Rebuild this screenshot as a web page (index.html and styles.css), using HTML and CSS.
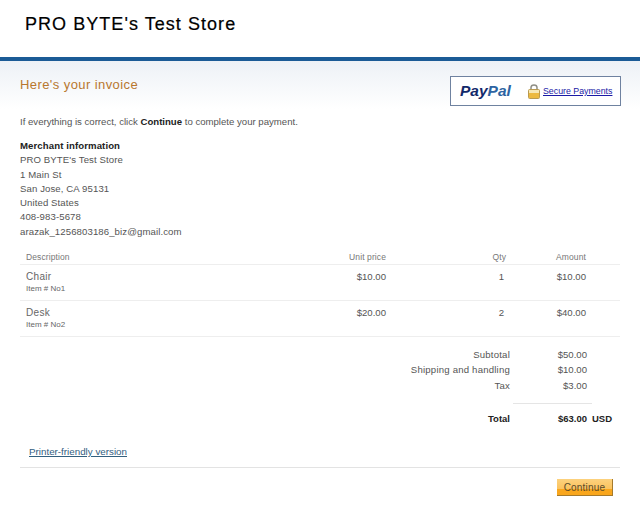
FILE: index.html
```html
<!DOCTYPE html>
<html lang="en">
<head>
<meta charset="utf-8">
<title>PRO BYTE's Test Store</title>
<link rel="stylesheet" href="styles.css">
</head>
<body>
<header class="store"><h1>PRO BYTE's Test Store</h1></header>
<main class="band">
  <div class="top">
    <h2>Here's your invoice</h2>
    <div class="secure">
      <span class="logo"><span class="pay">Pay</span><span class="pal">Pal</span></span>
      <svg class="lock" width="12" height="15" viewBox="0 0 12 15" aria-hidden="true">
        <path d="M3 6V3.6C3 2 4.2 1 6 1s3 1 3 2.6V6" fill="none" stroke="#8f8f86" stroke-width="1.5"/>
        <rect x="0.5" y="5.5" width="11" height="9" rx="1" fill="#f6e7b4" stroke="#b99a50"/>
        <rect x="1" y="9" width="10" height="5" fill="#ecb93f"/>
      </svg>
      <a href="#" class="secure-link">Secure Payments</a>
    </div>
  </div>
  <p class="intro">If everything is correct, click <b>Continue</b> to complete your payment.</p>
  <address class="merchant">
    <b>Merchant information</b>
    <span>PRO BYTE's Test Store</span>
    <span>1 Main St</span>
    <span>San Jose, CA 95131</span>
    <span>United States</span>
    <span>408-983-5678</span>
    <span>arazak_1256803186_biz@gmail.com</span>
  </address>
  <section class="items">
    <div class="row head">
      <span class="desc">Description</span><span class="price">Unit price</span><span class="qty">Qty</span><span class="amt">Amount</span>
    </div>
    <div class="row item">
      <div class="desc">Chair<small>Item # No1</small></div><span class="price">$10.00</span><span class="qty">1</span><span class="amt">$10.00</span>
    </div>
    <div class="row item">
      <div class="desc">Desk<small>Item # No2</small></div><span class="price">$20.00</span><span class="qty">2</span><span class="amt">$40.00</span>
    </div>
  </section>
  <section class="totals">
    <div class="line"><span class="label">Subtotal</span><span class="value">$50.00</span></div>
    <div class="line"><span class="label">Shipping and handling</span><span class="value">$10.00</span></div>
    <div class="line"><span class="label">Tax</span><span class="value">$3.00</span></div>
    <div class="line total"><span class="label">Total</span><span class="value">$63.00</span><span class="cur">USD</span></div>
  </section>
  <a href="#" class="printer">Printer-friendly version</a>
  <div class="actions"><button type="button" class="continue">Continue</button></div>
</main>
</body>
</html>
```
FILE: styles.css
```css
html, body { margin: 0; padding: 0; background: #fff; }
body { width: 640px; height: 520px; overflow: hidden; font: 9.6px/14px "Liberation Sans", Arial, sans-serif; color: #555; }
.store { height: 57px; border-bottom: 4px solid #1b5b96; }
.store h1 { margin: 0; padding: 13px 0 0 25px; font: 400 18px/22px "Liberation Sans", Arial, sans-serif; letter-spacing: 1.05px; color: #000; -webkit-text-stroke: 0.2px #000; }
.band { padding: 0 27px 0 20px; background: linear-gradient(#edf1f6, #fff 48px) no-repeat; height: 459px; box-sizing: border-box; }
.top { display: flex; justify-content: space-between; align-items: flex-start; padding-top: 15px; margin-right: -8px; }
.top h2 { margin: 0; font: 400 13px/18px "Liberation Sans", Arial, sans-serif; letter-spacing: 0.42px; color: #b8772f; }
.secure { width: 171px; height: 30px; box-sizing: border-box; background: #fff; border: 1px solid #6f82a0; display: flex; align-items: center; padding-left: 9px; }
.logo { font: italic 700 15.5px/16px "Liberation Sans", Arial, sans-serif; width: 68px; }
.pay { color: #12296a; }
.pal { color: #2d64a2; }
.lock { margin-right: 3px; }
.secure-link { color: #1a1aa6; font-size: 8.8px; }
.intro { margin: 0; padding-top: 9px; }
.intro b, .merchant b { color: #222; }
.merchant { display: flex; flex-direction: column; font-style: normal; margin-top: 10px; line-height: 14.3px; letter-spacing: 0.1px; }
.items { margin-top: 11px; margin-right: -7px; }
.row { display: grid; grid-template-columns: 310px 50px 120px 80px; border-bottom: 1px solid #eee; padding-left: 6px; white-space: nowrap; }
.head { height: 15px; box-sizing: border-box; line-height: 14px; font-size: 8.5px; letter-spacing: 0.1px; color: #777; }
.item { height: 36px; box-sizing: border-box; padding-top: 6px; line-height: 12px; }
.item .desc { color: #666; font-size: 10px; letter-spacing: 0.3px; }
.row small { display: block; font-size: 8px; line-height: 11px; letter-spacing: 0; }
.price, .qty, .amt { text-align: right; }
.item .qty { padding-right: 2px; }
.totals { margin-top: 10px; }
.line { display: flex; height: 15.3px; line-height: 15px; }
.label { width: 490px; text-align: right; letter-spacing: 0.2px; }
.value { width: 77px; text-align: right; }
.total { margin-top: 18.4px; color: #222; font-weight: 700; position: relative; font-size: 9.5px; }
.total .label { letter-spacing: 0; }
.total::before { content: ""; position: absolute; left: 493px; width: 79px; top: -8px; border-top: 1px solid #e5e5e5; }
.cur { margin-left: 5px; }
.printer { display: block; margin: 18.4px 0 0 9px; color: #33607f; font-size: 9.8px; line-height: 14px; }
.actions { margin-right: -7px; margin-top: 8px; border-top: 1px solid #e3e3e3; padding-top: 11px; display: flex; justify-content: flex-end; padding-right: 7px; }
.continue { width: 56px; height: 17px; padding: 0; border: 0; border-right: 1px solid #a57a2c; border-bottom: 1px solid #a57a2c; background: linear-gradient(#fcd27e 0, #fbc35f 60%, #f9a61c 62%, #f9a61c 100%); color: #5a4a2a; font: 10px/15px "Liberation Sans", Arial, sans-serif; letter-spacing: 0.2px; }
```
